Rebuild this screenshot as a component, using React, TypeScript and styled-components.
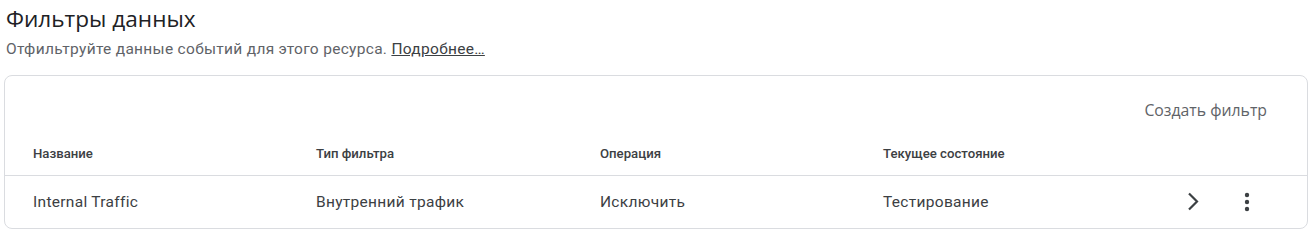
import React from "react";
import styled, { createGlobalStyle } from "styled-components";

const GlobalStyle = createGlobalStyle`
  body {
    margin: 0;
    background: #fff;
    font-family: Roboto, "Liberation Sans", sans-serif;
    color: #202124;
  }
`;

const Page = styled.div`
  padding: 4px 1px 0 4px;
`;

const Title = styled.h1`
  margin: 0 0 0 2px;
  font-family: "Open Sans", Roboto, sans-serif;
  font-size: 22.6px;
  font-weight: 400;
  line-height: 30px;
  color: #202124;
`;

const Subtitle = styled.p`
  margin: 5px 0 0 2px;
  font-size: 15.5px;
  letter-spacing: 0.3px;
  line-height: 20px;
  color: #5f6368;

  a {
    color: #3c4043;
    text-decoration: underline;
  }
`;

const Card = styled.div`
  margin-top: 16px;
  border: 1px solid #dadce0;
  border-radius: 8px;
  height: 152px;
  overflow: hidden;
`;

const Toolbar = styled.div`
  display: flex;
  justify-content: flex-end;
  padding: 16px 28px 0 0;
`;

const TextButton = styled.button`
  height: 36px;
  padding: 0 12px;
  border: none;
  background: none;
  font-family: "Open Sans", Roboto, sans-serif;
  font-size: 15.8px;
  color: #5f6368;
  cursor: pointer;
`;

const Row = styled.div<{ $header?: boolean }>`
  display: grid;
  grid-template-columns: 283px 284px 283px 1fr auto;
  align-items: center;
  padding-left: 28px;
  height: ${(p) => (p.$header ? "48px" : "52px")};
  padding-top: ${(p) => (p.$header ? "3px" : "0")};
  box-sizing: border-box;
  border-bottom: ${(p) => (p.$header ? "1px solid #dadce0" : "none")};
`;

const HeadCell = styled.div`
  font-size: 13.2px;
  font-weight: 500;
  color: #3c4043;
`;

const Cell = styled.div`
  font-size: 15.5px;
  letter-spacing: 0.3px;
  color: #3c4043;
`;

const Actions = styled.div`
  display: flex;
  align-items: center;
  gap: 6px;
  padding-right: 36px;
`;

const IconButton = styled.button`
  width: 48px;
  height: 48px;
  display: flex;
  align-items: center;
  justify-content: center;
  border: none;
  background: none;
  padding: 0;
  color: #3c4043;
  cursor: pointer;
`;

const Chevron = () => (
  <svg width="28" height="28" viewBox="0 0 28 28">
    <polyline
      points="10,5.5 18,13.5 10,21.5"
      fill="none"
      stroke="currentColor"
      strokeWidth="2.2"
    />
  </svg>
);

const Kebab = () => (
  <svg width="28" height="28" viewBox="0 0 28 28" fill="currentColor">
    <circle cx="14" cy="7" r="2.2" />
    <circle cx="14" cy="14" r="2.2" />
    <circle cx="14" cy="21" r="2.2" />
  </svg>
);

const filters = [
  {
    name: "Internal Traffic",
    type: "Внутренний трафик",
    operation: "Исключить",
    state: "Тестирование",
  },
];

export default function App() {
  return (
    <Page>
      <GlobalStyle />
      <Title>Фильтры данных</Title>
      <Subtitle>
        Отфильтруйте данные событий для этого ресурса. <a href="#">Подробнее…</a>
      </Subtitle>
      <Card>
        <Toolbar>
          <TextButton>Создать фильтр</TextButton>
        </Toolbar>
        <Row $header>
          <HeadCell>Название</HeadCell>
          <HeadCell>Тип фильтра</HeadCell>
          <HeadCell>Операция</HeadCell>
          <HeadCell>Текущее состояние</HeadCell>
          <div />
        </Row>
        {filters.map((f) => (
          <Row key={f.name}>
            <Cell>{f.name}</Cell>
            <Cell>{f.type}</Cell>
            <Cell>{f.operation}</Cell>
            <Cell>{f.state}</Cell>
            <Actions>
              <IconButton>
                <Chevron />
              </IconButton>
              <IconButton>
                <Kebab />
              </IconButton>
            </Actions>
          </Row>
        ))}
      </Card>
    </Page>
  );
}
